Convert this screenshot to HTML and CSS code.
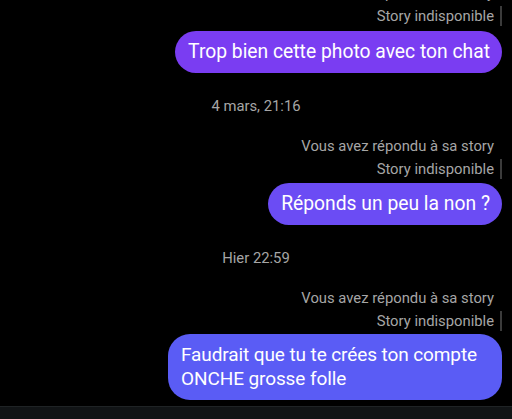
FILE: index.html
```html
<!DOCTYPE html>
<html lang="fr">
<head>
<meta charset="utf-8">
<link rel="stylesheet" href="styles.css">
</head>
<body>
<div class="thread">
  <div class="meta meta-first">Vous avez répondu à sa story</div>
  <div class="meta story"><span>Story indisponible</span><i class="bar"></i></div>
  <div class="bubble b1">Trop bien cette photo avec ton chat</div>

  <div class="stamp">4 mars, 21:16</div>
  <div class="meta">Vous avez répondu à sa story</div>
  <div class="meta story"><span>Story indisponible</span><i class="bar"></i></div>
  <div class="bubble b2">Réponds un peu la non ?</div>

  <div class="stamp">Hier 22:59</div>
  <div class="meta">Vous avez répondu à sa story</div>
  <div class="meta story"><span>Story indisponible</span><i class="bar"></i></div>
  <div class="bubble b3">Faudrait que tu te crées ton compte ONCHE grosse folle</div>
</div>
<div class="bottombar"></div>
</body>
</html>
```
FILE: styles.css
```css
html, body {
  margin: 0;
  padding: 0;
  background: #000;
  height: 419px;
  overflow: hidden;
}
body {
  font-family: Roboto, "Noto Sans", sans-serif;
  display: flex;
  flex-direction: column;
}
.thread {
  display: flex;
  flex-direction: column;
  align-items: flex-end;
  padding-right: 10px;
  margin-top: -17px;
}
.meta {
  font-size: 14.8px;
  line-height: 20px;
  color: #a6a6a6;
  padding-right: 8px;
}
.meta + .story { margin-top: 3px; }
.story {
  display: flex;
  align-items: center;
  padding-right: 0;
}
.story .bar {
  display: block;
  width: 2px;
  height: 20px;
  background: #3b3b3b;
  margin-left: 6px;
}
.bubble {
  box-sizing: border-box;
  max-width: 336px;
  padding: 9px 12px 9px 13px;
  font-size: 19.3px;
  line-height: 24px;
  color: #fff;
  border-radius: 21px;
  margin-top: 4px;
}
.b1 { background: #7a3df2; margin-top: 5px; }
.b2 { background: #6b4cf4; }
.b3 { background: #5a5cf5; border-radius: 22px; margin-top: 3px; max-width: 334px; font-size: 19px; letter-spacing: -0.1px; }
.stamp {
  align-self: center;
  font-size: 14.8px;
  line-height: 20px;
  color: #a6a6a6;
  margin-top: 23px;
  margin-bottom: 20px;
  margin-right: -10px;
}
.bottombar {
  margin-top: 6px;
  flex: 1;
  background: #111416;
  border-top: 1px solid #1f2325;
}
```
